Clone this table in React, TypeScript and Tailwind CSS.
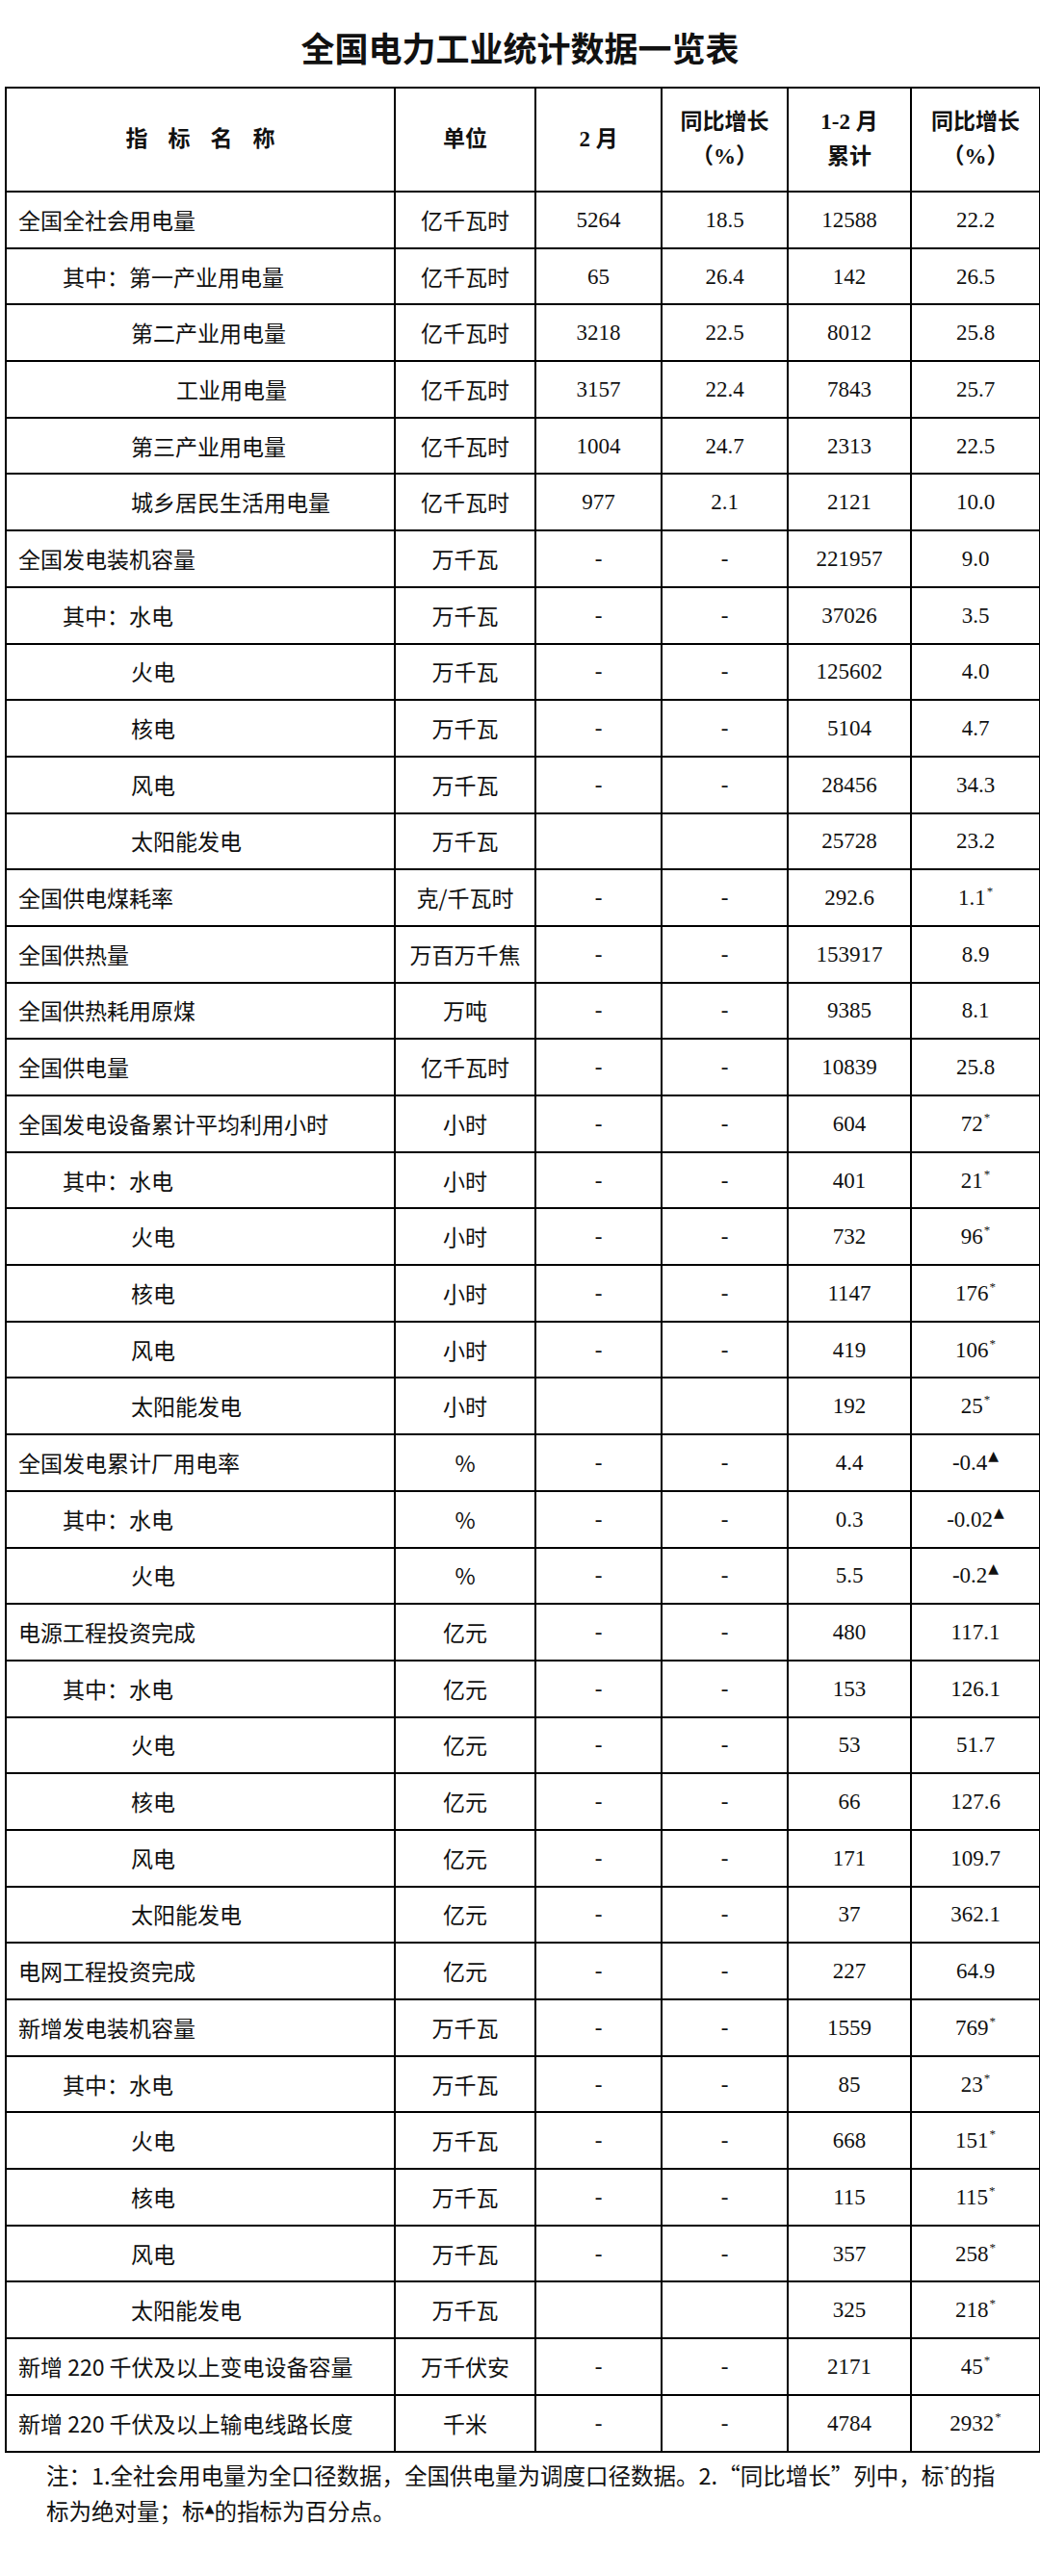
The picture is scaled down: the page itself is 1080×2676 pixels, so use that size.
type Row = {
  name: string;
  level: 0 | 1 | 2 | 3;
  unit: string;
  feb: string;
  febYoy: string;
  cum: string;
  cumYoy: string;
  mark?: 'star' | 'tri';
};

const rows: Row[] = [
  { name: '全国全社会用电量', level: 0, unit: '亿千瓦时', feb: '5264', febYoy: '18.5', cum: '12588', cumYoy: '22.2' },
  { name: '其中：第一产业用电量', level: 1, unit: '亿千瓦时', feb: '65', febYoy: '26.4', cum: '142', cumYoy: '26.5' },
  { name: '第二产业用电量', level: 2, unit: '亿千瓦时', feb: '3218', febYoy: '22.5', cum: '8012', cumYoy: '25.8' },
  { name: '工业用电量', level: 3, unit: '亿千瓦时', feb: '3157', febYoy: '22.4', cum: '7843', cumYoy: '25.7' },
  { name: '第三产业用电量', level: 2, unit: '亿千瓦时', feb: '1004', febYoy: '24.7', cum: '2313', cumYoy: '22.5' },
  { name: '城乡居民生活用电量', level: 2, unit: '亿千瓦时', feb: '977', febYoy: '2.1', cum: '2121', cumYoy: '10.0' },
  { name: '全国发电装机容量', level: 0, unit: '万千瓦', feb: '-', febYoy: '-', cum: '221957', cumYoy: '9.0' },
  { name: '其中：水电', level: 1, unit: '万千瓦', feb: '-', febYoy: '-', cum: '37026', cumYoy: '3.5' },
  { name: '火电', level: 2, unit: '万千瓦', feb: '-', febYoy: '-', cum: '125602', cumYoy: '4.0' },
  { name: '核电', level: 2, unit: '万千瓦', feb: '-', febYoy: '-', cum: '5104', cumYoy: '4.7' },
  { name: '风电', level: 2, unit: '万千瓦', feb: '-', febYoy: '-', cum: '28456', cumYoy: '34.3' },
  { name: '太阳能发电', level: 2, unit: '万千瓦', feb: '', febYoy: '', cum: '25728', cumYoy: '23.2' },
  { name: '全国供电煤耗率', level: 0, unit: '克/千瓦时', feb: '-', febYoy: '-', cum: '292.6', cumYoy: '1.1', mark: 'star' },
  { name: '全国供热量', level: 0, unit: '万百万千焦', feb: '-', febYoy: '-', cum: '153917', cumYoy: '8.9' },
  { name: '全国供热耗用原煤', level: 0, unit: '万吨', feb: '-', febYoy: '-', cum: '9385', cumYoy: '8.1' },
  { name: '全国供电量', level: 0, unit: '亿千瓦时', feb: '-', febYoy: '-', cum: '10839', cumYoy: '25.8' },
  { name: '全国发电设备累计平均利用小时', level: 0, unit: '小时', feb: '-', febYoy: '-', cum: '604', cumYoy: '72', mark: 'star' },
  { name: '其中：水电', level: 1, unit: '小时', feb: '-', febYoy: '-', cum: '401', cumYoy: '21', mark: 'star' },
  { name: '火电', level: 2, unit: '小时', feb: '-', febYoy: '-', cum: '732', cumYoy: '96', mark: 'star' },
  { name: '核电', level: 2, unit: '小时', feb: '-', febYoy: '-', cum: '1147', cumYoy: '176', mark: 'star' },
  { name: '风电', level: 2, unit: '小时', feb: '-', febYoy: '-', cum: '419', cumYoy: '106', mark: 'star' },
  { name: '太阳能发电', level: 2, unit: '小时', feb: '', febYoy: '', cum: '192', cumYoy: '25', mark: 'star' },
  { name: '全国发电累计厂用电率', level: 0, unit: '%', feb: '-', febYoy: '-', cum: '4.4', cumYoy: '-0.4', mark: 'tri' },
  { name: '其中：水电', level: 1, unit: '%', feb: '-', febYoy: '-', cum: '0.3', cumYoy: '-0.02', mark: 'tri' },
  { name: '火电', level: 2, unit: '%', feb: '-', febYoy: '-', cum: '5.5', cumYoy: '-0.2', mark: 'tri' },
  { name: '电源工程投资完成', level: 0, unit: '亿元', feb: '-', febYoy: '-', cum: '480', cumYoy: '117.1' },
  { name: '其中：水电', level: 1, unit: '亿元', feb: '-', febYoy: '-', cum: '153', cumYoy: '126.1' },
  { name: '火电', level: 2, unit: '亿元', feb: '-', febYoy: '-', cum: '53', cumYoy: '51.7' },
  { name: '核电', level: 2, unit: '亿元', feb: '-', febYoy: '-', cum: '66', cumYoy: '127.6' },
  { name: '风电', level: 2, unit: '亿元', feb: '-', febYoy: '-', cum: '171', cumYoy: '109.7' },
  { name: '太阳能发电', level: 2, unit: '亿元', feb: '-', febYoy: '-', cum: '37', cumYoy: '362.1' },
  { name: '电网工程投资完成', level: 0, unit: '亿元', feb: '-', febYoy: '-', cum: '227', cumYoy: '64.9' },
  { name: '新增发电装机容量', level: 0, unit: '万千瓦', feb: '-', febYoy: '-', cum: '1559', cumYoy: '769', mark: 'star' },
  { name: '其中：水电', level: 1, unit: '万千瓦', feb: '-', febYoy: '-', cum: '85', cumYoy: '23', mark: 'star' },
  { name: '火电', level: 2, unit: '万千瓦', feb: '-', febYoy: '-', cum: '668', cumYoy: '151', mark: 'star' },
  { name: '核电', level: 2, unit: '万千瓦', feb: '-', febYoy: '-', cum: '115', cumYoy: '115', mark: 'star' },
  { name: '风电', level: 2, unit: '万千瓦', feb: '-', febYoy: '-', cum: '357', cumYoy: '258', mark: 'star' },
  { name: '太阳能发电', level: 2, unit: '万千瓦', feb: '', febYoy: '', cum: '325', cumYoy: '218', mark: 'star' },
  { name: '新增 220 千伏及以上变电设备容量', level: 0, unit: '万千伏安', feb: '-', febYoy: '-', cum: '2171', cumYoy: '45', mark: 'star' },
  { name: '新增 220 千伏及以上输电线路长度', level: 0, unit: '千米', feb: '-', febYoy: '-', cum: '4784', cumYoy: '2932', mark: 'star' },
];

const indent = ['pl-[12px]', 'pl-[58px]', 'pl-[129px]', 'pl-[176px]'];

const sans = "font-['Noto_Sans_CJK_SC',sans-serif]";
const serif = "font-['Liberation_Serif','Noto_Sans_CJK_SC',serif]";

function Mark({ type }: { type?: 'star' | 'tri' }) {
  if (type === 'star') {
    return <span className="relative -top-[10px] ml-[1px] text-[13px] leading-none">*</span>;
  }
  if (type === 'tri') {
    return (
      <span className="relative -top-[10px] ml-[1px] font-['DejaVu_Sans',sans-serif] text-[14px] leading-none">▲</span>
    );
  }
  return null;
}

export default function App() {
  const th = `border-2 border-black text-center align-middle font-bold text-[23px] leading-[36px] ${serif}`;
  const td = 'border-2 border-black align-middle text-[23px] leading-none';

  return (
    <div className="w-[1080px] h-[2676px] bg-white text-[#111]">
      <h1 className={`h-[90px] pt-[31px] text-center text-[35px] leading-[35px] font-bold ${sans}`}>
        全国电力工业统计数据一览表
      </h1>

      <table className="ml-[5px] w-[1074px] table-fixed border-collapse border-2 border-black">
        <colgroup>
          <col className="w-[404px]" />
          <col className="w-[146px]" />
          <col className="w-[131px]" />
          <col className="w-[131px]" />
          <col className="w-[128px]" />
          <col className="w-[134px]" />
        </colgroup>
        <thead>
          <tr className="h-[108px]">
            <th className={`${th} tracking-[21px] pl-[21px]`}>指标名称</th>
            <th className={th}>单位</th>
            <th className={th}>2 月</th>
            <th className={th}>
              同比增长
              <br />
              （%）
            </th>
            <th className={th}>
              1-2 月
              <br />
              累计
            </th>
            <th className={th}>
              同比增长
              <br />
              （%）
            </th>
          </tr>
        </thead>
        <tbody>
          {rows.map((r, i) => (
            <tr key={i} className="h-[58.7px]">
              <td className={`${td} ${sans} ${indent[r.level]} whitespace-nowrap`}>{r.name}</td>
              <td className={`${td} ${sans} text-center`}>{r.unit}</td>
              <td className={`${td} ${serif} text-center`}>{r.feb}</td>
              <td className={`${td} ${serif} text-center`}>{r.febYoy}</td>
              <td className={`${td} ${serif} text-center`}>{r.cum}</td>
              <td className={`${td} ${serif} text-center whitespace-nowrap`}>
                {r.cumYoy}
                <Mark type={r.mark} />
              </td>
            </tr>
          ))}
        </tbody>
      </table>

      <div className={`pl-[48px] pt-[5px] text-[23.5px] leading-[37px] whitespace-nowrap ${sans}`}>
        <div>
          注：1.全社会用电量为全口径数据，全国供电量为调度口径数据。2.“同比增长”列中，标
          <span className="relative -top-[9px] text-[13px] leading-none">*</span>
          的指
        </div>
        <div>
          标为绝对量；标
          <span className="relative -top-[8px] font-['DejaVu_Sans',sans-serif] text-[13px] leading-none">▲</span>
          的指标为百分点。
        </div>
      </div>
    </div>
  );
}
